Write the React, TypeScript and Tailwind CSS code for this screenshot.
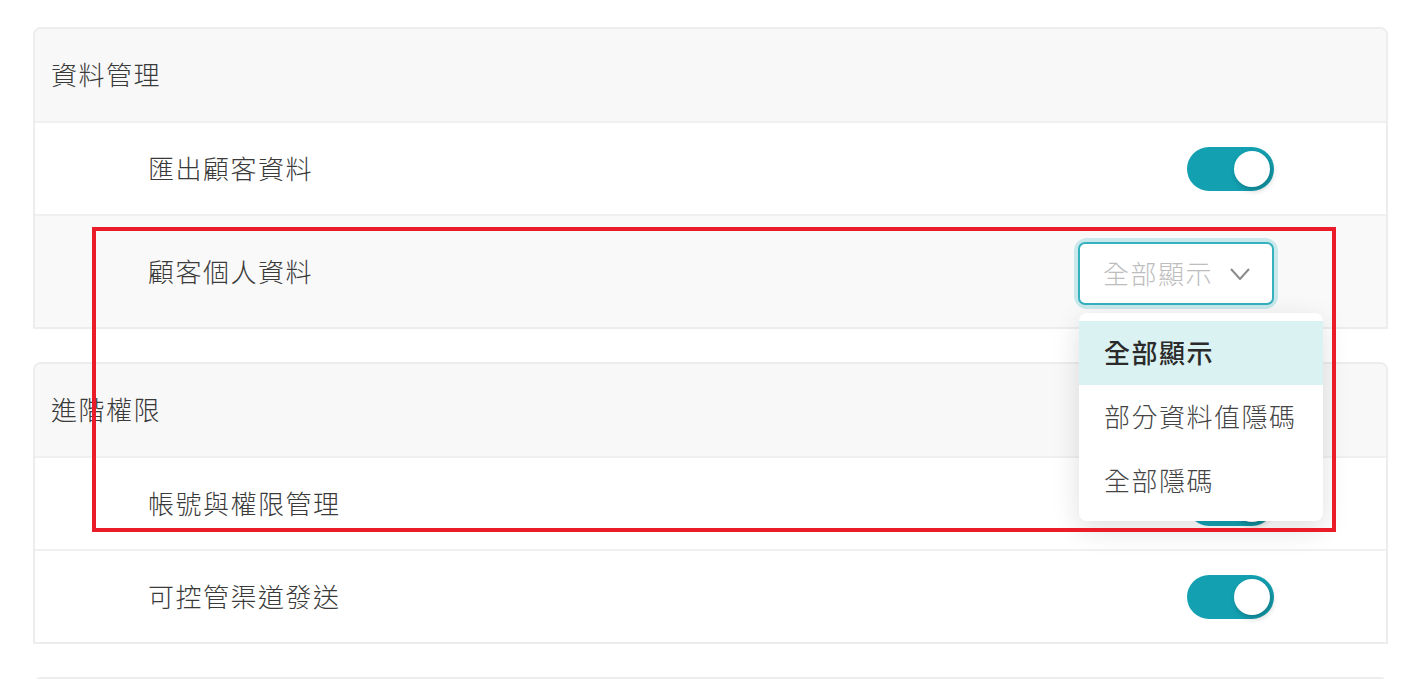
import { useState } from 'react'

const font = { fontFamily: '"Noto Sans CJK TC", "Noto Sans", sans-serif' }

function Toggle({ on = true }: { on?: boolean }) {
  return (
    <div
      className={`relative h-[44px] w-[87px] rounded-full ${on ? 'bg-[#13a1b2]' : 'bg-[#d9d9d9]'}`}
    >
      <span
        className={`absolute top-[4px] h-[36px] w-[36px] rounded-full bg-white shadow-[2px_3px_6px_rgba(0,0,0,0.25)] ${on ? 'right-[4px]' : 'left-[4px]'}`}
      />
    </div>
  )
}

function Row({
  label,
  children,
  tall,
  shaded,
}: {
  label: string
  children: React.ReactNode
  tall?: boolean
  shaded?: boolean
}) {
  return (
    <div
      className={`flex items-center justify-between border-t-2 border-[#f0f0f0] pl-[113px] pr-[112px] ${tall ? 'h-[113px]' : 'h-[93px]'} ${shaded ? 'bg-[#f9f9f9]' : 'bg-white'}`}
    >
      <span className="pb-[3px] text-[26px] font-light tracking-[1.5px] text-[#3a3a3a]">{label}</span>
      {children}
    </div>
  )
}

function Card({ title, children }: { title: string; children?: React.ReactNode }) {
  return (
    <div className="rounded-t-[8px] border-2 border-[#ededed]">
      <div className="flex h-[92px] items-center rounded-t-[6px] bg-[#f8f8f8] pl-[16px]">
        <span className="pb-[4px] text-[26px] font-light tracking-[1.5px] text-[#3a3a3a]">{title}</span>
      </div>
      {children}
    </div>
  )
}

const options = ['全部顯示', '部分資料值隱碼', '全部隱碼']

function Select() {
  const [value] = useState(options[0])
  return (
    <div className="relative mt-[4px]">
      <div className="rounded-[9px] ring-4 ring-[#c9e8ec]">
        <div className="flex h-[63px] w-[196px] items-center justify-between rounded-[7px] border-2 border-[#35b0be] bg-white pl-[23px] pr-[22px]">
          <span className="pb-[3px] text-[26px] font-light tracking-[1.5px] text-[#bdbdbd]">{value}</span>
          <svg width="20" height="12" viewBox="0 0 20 12" fill="none">
            <polyline points="1,1 10,11 19,1" stroke="#8a8a8a" strokeWidth="2" />
          </svg>
        </div>
      </div>
      {/* dropdown */}
      <div className="absolute left-[1px] top-[71px] z-10 w-[244px] rounded-[8px] bg-white py-[8px] shadow-[0_8px_28px_rgba(0,0,0,0.13)]">
        {options.map((o) => (
          <div
            key={o}
            className={`flex h-[64px] items-center pb-[3px] pl-[25px] text-[26px] tracking-[1.5px] ${o === value ? 'bg-[#dbf2f3] font-medium text-[#2b2b2b]' : 'font-light text-[#444]'}`}
          >
            {o}
          </div>
        ))}
      </div>
    </div>
  )
}

export default function App() {
  return (
    <div className="relative h-[679px] overflow-hidden bg-white pl-[33px] pr-[30px] pt-[27px]" style={font}>
      <div className="flex flex-col gap-[33px]">
        <Card title="資料管理">
          <Row label="匯出顧客資料">
            <Toggle />
          </Row>
          <Row label="顧客個人資料" tall shaded>
            <Select />
          </Row>
        </Card>
        <Card title="進階權限">
          <Row label="帳號與權限管理">
            <Toggle />
          </Row>
          <Row label="可控管渠道發送">
            <Toggle />
          </Row>
        </Card>
        <Card title="" />
      </div>

      {/* annotation box */}
      <div className="pointer-events-none absolute left-[92px] top-[227px] z-20 h-[305px] w-[1244px] border-4 border-[#ea1c2a]" />
    </div>
  )
}
